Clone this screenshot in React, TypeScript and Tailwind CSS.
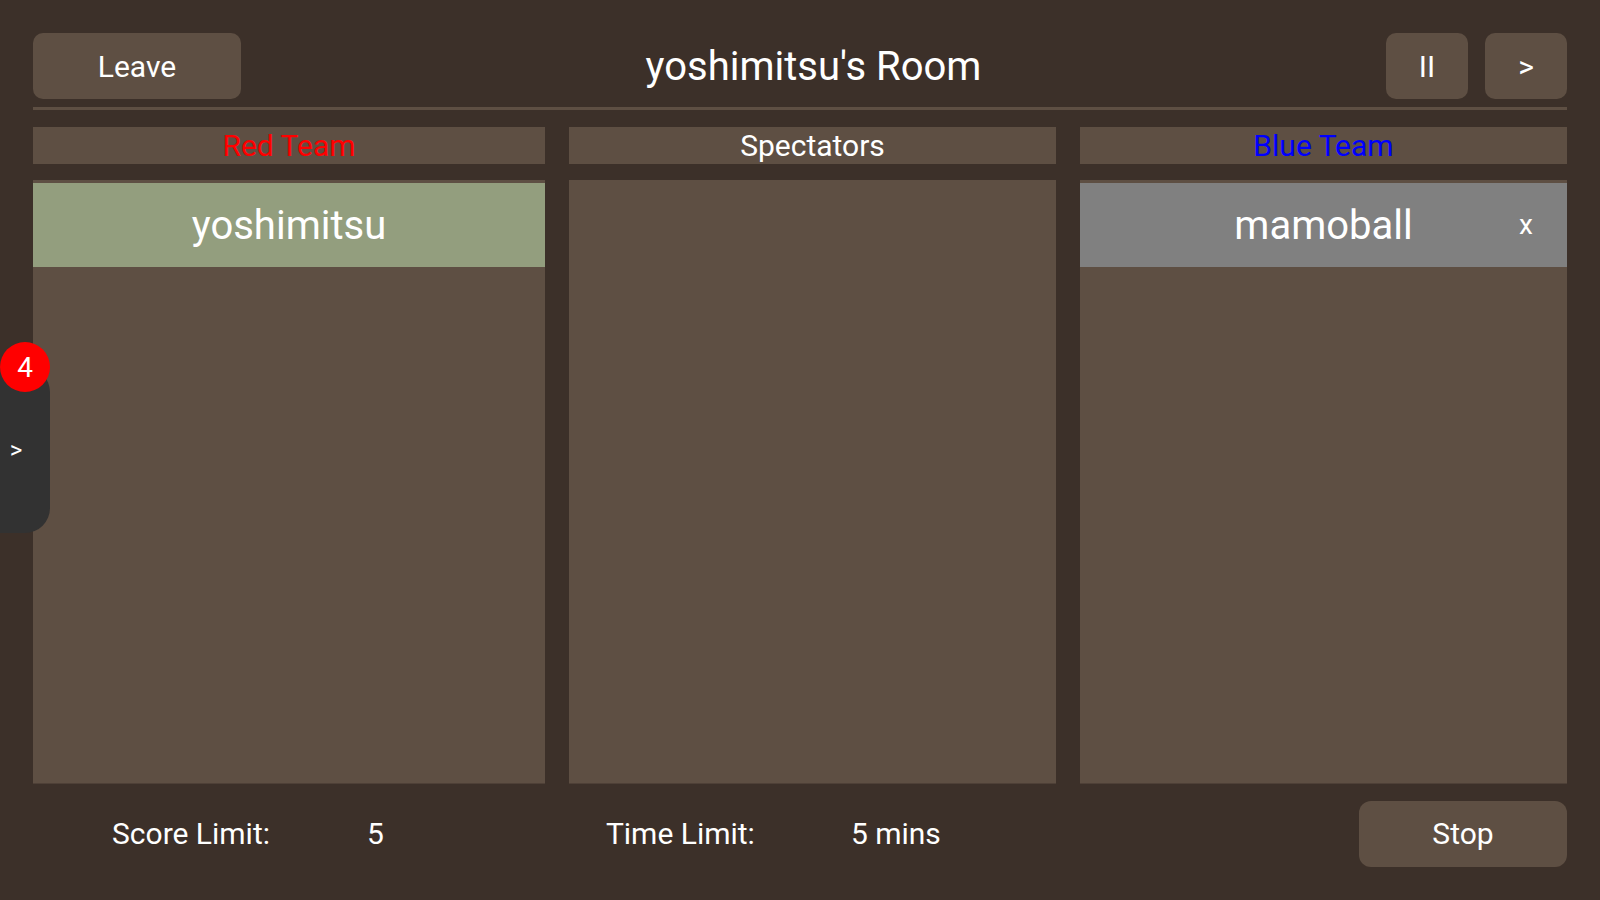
import React from "react";

export default function App() {
  return (
    <div className="relative w-full h-[900px] overflow-hidden bg-[#3c3029] text-white font-['Roboto','Noto_Sans',sans-serif] px-[33px] pt-[33px] flex flex-col">
      {/* Header */}
      <div className="flex items-stretch h-[66px]">
        <button className="w-[208px] rounded-[10px] bg-[#5e4f43] text-[30px] leading-none flex items-center justify-center pt-[1px]">
          Leave
        </button>
        <div className="flex-1 flex items-center justify-center text-[40px] leading-none pt-[2px]">
          yoshimitsu's Room
        </div>
        <div className="flex gap-[17px]">
          <button className="w-[82px] rounded-[10px] bg-[#5e4f43] text-[30px] leading-none flex items-center justify-center pt-[1px]">
            II
          </button>
          <button className="w-[82px] rounded-[10px] bg-[#5e4f43] text-[30px] leading-none flex items-center justify-center pt-[1px]">
            &gt;
          </button>
        </div>
      </div>

      {/* Divider */}
      <div className="mt-[8px] h-[3px] bg-[#5e4f43]" />

      {/* Columns */}
      <div className="mt-[17px] flex gap-[24px]">
        <div className="w-[512px] flex flex-col">
          <div className="h-[37px] bg-[#5e4f43] text-[#ff0000] text-[30px] leading-none flex items-center justify-center">
            Red Team
          </div>
          <div className="mt-[16px] h-[604px] bg-[#5e4f43] border-b border-[#4e4037] pt-[3px]">
            <div className="h-[84px] bg-[#939e7e] text-[40px] leading-none flex items-center justify-center pt-[2px]">
              yoshimitsu
            </div>
          </div>
        </div>
        <div className="w-[487px] flex flex-col">
          <div className="h-[37px] bg-[#5e4f43] text-[30px] leading-none flex items-center justify-center">
            Spectators
          </div>
          <div className="mt-[16px] h-[604px] bg-[#5e4f43] border-b border-[#4e4037]" />
        </div>
        <div className="flex-1 flex flex-col">
          <div className="h-[37px] bg-[#5e4f43] text-[#0000ff] text-[30px] leading-none flex items-center justify-center">
            Blue Team
          </div>
          <div className="mt-[16px] h-[604px] bg-[#5e4f43] border-b border-[#4e4037] pt-[3px]">
            <div className="relative h-[84px] bg-[#808080] text-[40px] leading-none flex items-center justify-center pt-[2px]">
              mamoball
              <span className="absolute right-[34px] top-1/2 -translate-y-1/2 text-[28px] leading-none">x</span>
            </div>
          </div>
        </div>
      </div>

      {/* Bottom */}
      <div className="mt-[17px] flex items-center h-[66px]">
        <span className="ml-[79px] text-[30px] leading-none">Score Limit:</span>
        <span className="ml-[97px] text-[30px] leading-none">5</span>
        <span className="ml-[222px] text-[30px] leading-none">Time Limit:</span>
        <span className="ml-[96px] text-[30px] leading-none">5 mins</span>
        <div className="flex-1" />
        <button className="w-[208px] h-[66px] rounded-[12px] bg-[#5e4f43] text-[30px] leading-none flex items-center justify-center">
          Stop
        </button>
      </div>

      {/* Side tab */}
      <div className="absolute left-0 top-[367px] w-[50px] h-[166px] bg-[#323232] rounded-r-[25px] flex items-center justify-center">
        <span className="text-[24px] leading-none -ml-[18px]">&gt;</span>
      </div>
      <div className="absolute left-0 top-[342px] w-[50px] h-[50px] rounded-full bg-[#ff0000] flex items-center justify-center text-[28px] leading-none pt-[1px]">
        4
      </div>
    </div>
  );
}
